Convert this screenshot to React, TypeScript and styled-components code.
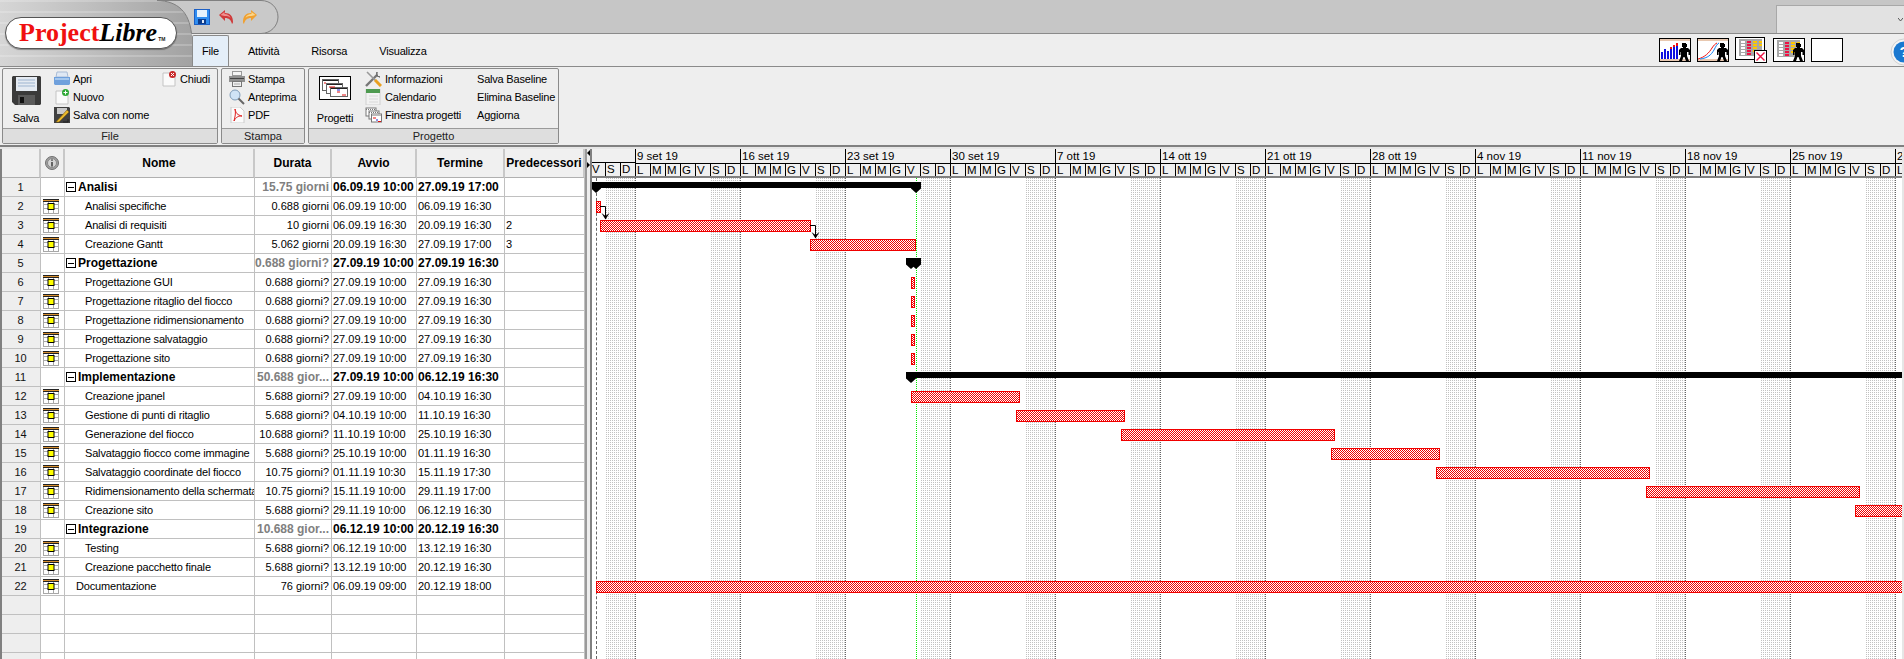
import React from 'react';
import styled, { createGlobalStyle } from 'styled-components';

const CHART_LEFT = 592;
const COLUMNS = '39px 24px 190px 77px 85px 88px 80px';

const GlobalStyle = createGlobalStyle`
    html, body {
        margin: 0;
        padding: 0;
        background: #eeeeee;
        overflow: hidden;
    }
    * {
        box-sizing: border-box;
    }
`
const Page = styled.div`
    width: 1904px;
    height: 659px;
    overflow: hidden;
    display: flex;
    flex-direction: column;
    font-family: "Liberation Sans", Arial, sans-serif;
    font-size: 11px;
    color: #000;
`

/* top bar */
const Header = styled.header`
    display: grid;
    grid-template-columns: 192px 1fr;
    height: 67px;
    border-bottom: 1px solid #8a8a8a;
`
const LogoPanel = styled.div`
    padding: 17px 0 0 5px;
    background:
        repeating-linear-gradient(180deg, rgba(255, 255, 255, 0.2) 0 2px, rgba(255, 255, 255, 0) 2px 11px),
        linear-gradient(90deg, #d6d6d6 0%, #bdbdbd 50%, #a2a2a2 100%);
`
const LogoPill = styled.div`
    width: 172px;
    height: 32px;
    background: #fff;
    border: 1px solid #555;
    border-radius: 16px;
    box-shadow: 0 1px 1px rgba(0, 0, 0, 0.35);
    display: flex;
    align-items: baseline;
    padding-left: 13px;
    font-family: "Liberation Serif", "Times New Roman", serif;
    font-size: 26px;
    font-weight: 700;
    line-height: 29px;
`
const LogoRed = styled.span`
    color: #f01010;
`
const LogoBlack = styled.span`
    color: #000;
    font-style: italic;
`
const LogoMark = styled.span`
    font-family: "Liberation Sans", sans-serif;
    font-size: 5px;
    margin-left: 1px;
    color: #222;
`
const HeaderRight = styled.div`
    display: flex;
    flex-direction: column;
    min-width: 0;
`
const TopRow = styled.div`
    height: 34px;
    display: flex;
    align-items: flex-end;
    justify-content: space-between;
    background: #c6c6c6;
    border-bottom: 1px solid #8a8a8a;
`
const QuickBar = styled.div`
    position: relative;
    width: 86px;
    height: 33px;
    display: flex;
    align-items: center;
    gap: 8px;
    padding: 0 0 0 2px;
`
const QuickCurve = styled.svg`
    position: absolute;
    left: -36px;
    top: 0;
`
const QuickIcon = styled.svg`
    position: relative;
`
const Combo = styled.div`
    width: 128px;
    height: 28px;
    background: #e2e2e2;
    border-left: 1px solid #a8a8a8;
    border-top: 1px solid #a8a8a8;
    display: flex;
    align-items: center;
    justify-content: flex-end;
    padding-right: 1px;
`
const TabBar = styled.nav`
    flex: 1;
    display: flex;
    align-items: flex-end;
    gap: 12px;
    background: #eeeeee;
    letter-spacing: -0.2px;
`
const Tab = styled.div<{ $active?: boolean }>`
    height: 31px;
    display: flex;
    align-items: center;
    padding: 0 9px;
    margin-right: ${p => (p.$active ? '-3px' : '0')};
    background: ${p => (p.$active ? '#e4eef8' : 'transparent')};
    border: 1px solid ${p => (p.$active ? '#8a8a8a' : 'transparent')};
    border-bottom: none;
    border-radius: 2px 2px 0 0;
`
const ViewTools = styled.div`
    margin-left: auto;
    align-self: stretch;
    display: flex;
    align-items: center;
    gap: 6px;
    position: relative;
    width: 245px;
`
const ViewButton = styled.svg`
    flex: none;
`
const HelpIcon = styled.svg`
    position: absolute;
    right: -14px;
    top: 4px;
`

/* ribbon */
const Ribbon = styled.section`
    height: 78px;
    display: flex;
    gap: 3px;
    padding: 1px 0 0 2px;
    background: #eeeeee;
`
const Group = styled.div<{ $width: number }>`
    width: ${p => p.$width}px;
    height: 76px;
    display: flex;
    flex-direction: column;
    border: 1px solid #8a8a8a;
    border-radius: 2px;
`
const GroupBody = styled.div`
    flex: 1;
    display: flex;
    min-height: 0;
    letter-spacing: -0.2px;
`
const GroupTitle = styled.div`
    height: 15px;
    line-height: 14px;
    text-align: center;
    background: #dedede;
    border-top: 1px solid #9a9a9a;
    color: #222;
`
const BigButton = styled.div<{ $width: number }>`
    width: ${p => p.$width}px;
    flex: none;
    display: flex;
    flex-direction: column;
    align-items: center;
    justify-content: space-between;
    padding: 7px 0 4px;
`
const ItemColumn = styled.div<{ $width?: number; $pad?: number }>`
    width: ${p => (p.$width ? `${p.$width}px` : 'auto')};
    flex: none;
    padding: 1px 0 0 ${p => p.$pad ?? 0}px;
`
const Item = styled.div`
    height: 18px;
    display: flex;
    align-items: center;
    gap: 3px;
    white-space: nowrap;
`

/* plan area */
const Workspace = styled.main`
    flex: 1;
    min-height: 0;
    display: flex;
    padding-top: 2px;
    border-top: 2px solid #808080;
    background: #e6e6e6;
`
const TablePane = styled.div`
    width: 585px;
    flex: none;
    border-left: 2px solid #808080;
    background: #fff;
    overflow: hidden;
`
const HeadRow = styled.div`
    display: grid;
    grid-template-columns: ${COLUMNS};
    height: 29px;
`
const HeadCell = styled.div`
    display: flex;
    align-items: center;
    justify-content: center;
    background: #f0f0f0;
    border-right: 2px solid #c8c8c8;
    border-bottom: 1px solid #b0b0b0;
    font-size: 12px;
    font-weight: 700;
    white-space: nowrap;
    overflow: hidden;
`
const Row = styled.div`
    display: grid;
    grid-template-columns: ${COLUMNS};
    height: 19px;
`
const Cell = styled.div<{ $bold?: boolean; $right?: boolean; $muted?: boolean }>`
    display: flex;
    align-items: center;
    justify-content: ${p => (p.$right ? 'flex-end' : 'flex-start')};
    padding: 0 2px 0 1px;
    border-right: 1px solid #c0c0c0;
    border-bottom: 1px solid #c0c0c0;
    font-size: ${p => (p.$bold ? '12px' : '11px')};
    font-weight: ${p => (p.$bold ? 700 : 400)};
    color: ${p => (p.$muted ? '#808080' : '#000')};
    white-space: nowrap;
    overflow: hidden;
`
const NumberCell = styled(Cell)`
    justify-content: center;
    background: #eeeeee;
    color: #111;
`
const IconCell = styled(Cell)`
    align-items: flex-start;
    padding: 2px 0 0 2px;
`
const NameCell = styled(Cell)<{ $indent: number }>`
    padding-left: ${p => p.$indent}px;
    letter-spacing: ${p => (p.$bold ? '0' : '-0.17px')};
`
const Collapse = styled.span`
    width: 10px;
    height: 10px;
    flex: none;
    margin-right: 2px;
    border: 1px solid #000;
    display: flex;
    align-items: center;
    justify-content: center;
    &::before {
        content: '';
        width: 6px;
        height: 1px;
        background: #000;
    }
`
const Splitter = styled.div`
    width: 7px;
    flex: none;
    position: relative;
    background: #eeeeee;
    border-left: 2px solid #9a9a9a;
    border-right: 2px solid #808080;
    &::before,
    &::after {
        content: '';
        position: absolute;
        left: 0;
        border-style: solid;
        border-width: 3px 3px 3px 0;
        border-color: transparent #000 transparent transparent;
    }
    &::before {
        top: 1px;
    }
    &::after {
        top: 13px;
        border-width: 3px 0 3px 3px;
        border-color: transparent transparent transparent #000;
    }
`

/* gantt */
const ChartPane = styled.div`
    width: 1310px;
    flex: none;
    display: flex;
    flex-direction: column;
    background: #fff;
    overflow: hidden;
`
const Timescale = styled.div`
    height: 29px;
    flex: none;
    background: #f0f0f0;
    border-bottom: 2px solid #808080;
    display: flex;
`
const ScaleWeek = styled.div<{ $width: number; $first?: boolean }>`
    width: ${p => p.$width}px;
    flex: none;
    display: flex;
    flex-direction: column;
    overflow: hidden;
    border-left: ${p => (p.$first ? 'none' : '1px solid #000')};
`
const WeekLabel = styled.div`
    height: 15px;
    line-height: 14px;
    padding-left: 1px;
    border-bottom: 1px solid #000;
    font-size: 11.5px;
    white-space: nowrap;
`
const Days = styled.div<{ $end?: boolean }>`
    display: flex;
    justify-content: ${p => (p.$end ? 'flex-end' : 'flex-start')};
    flex: 1;
`
const Day = styled.div<{ $first: boolean }>`
    width: ${p => (p.$first ? '14px' : '15px')};
    flex: none;
    padding-left: 1px;
    line-height: 13px;
    font-size: 11.5px;
    border-left: ${p => (p.$first ? 'none' : '1px solid #000')};
`
const ChartBody = styled.div`
    flex: 1;
    min-height: 0;
    position: relative;
`
const Bands = styled.div`
    position: absolute;
    inset: 0;
    display: flex;
`
const Band = styled.div<{ $width: number }>`
    width: ${p => p.$width}px;
    flex: none;
    display: flex;
    justify-content: flex-end;
    border-right: 1px dotted #666;
`
const Weekend = styled.div`
    width: 30px;
    background: conic-gradient(#c2c2c2 0 25%, #fff 0) 0 0 / 2px 2px;
`
const StartLine = styled.div`
    position: absolute;
    left: 4px;
    top: 0;
    bottom: 0;
    border-left: 1px dashed #666;
`
const StatusLine = styled.div`
    position: absolute;
    left: 324px;
    top: 0;
    bottom: 0;
    border-left: 1px dotted #00e800;
`
const GanttRow = styled.div`
    position: relative;
    height: 19px;
`
const TaskBar = styled.div`
    position: absolute;
    top: 4px;
    height: 12px;
    border: 1px solid #f00000;
    background: repeating-conic-gradient(#f00000 0 25%, #fff 0 50%) 0 0 / 2px 2px;
`
const SummaryBar = styled.div`
    position: absolute;
    top: 4px;
    height: 6px;
    background: #000;
    &::before,
    &::after {
        content: '';
        position: absolute;
        top: 0;
        width: 10px;
        height: 11px;
        background: #000;
        clip-path: polygon(0 0, 100% 0, 100% 58%, 50% 100%, 0 58%);
    }
    &::before {
        left: 0;
    }
    &::after {
        right: 0;
    }
`
const LinkArrow = styled.svg`
    position: absolute;
    top: 9px;
    z-index: 1;
`

/* small drawn icons */
const FloppyBlue = () => (
    <QuickIcon width="16" height="16" viewBox="0 0 16 16">
        <rect width="16" height="16" fill="#1c5fc4" />
        <rect x="1" y="1" width="14" height="14" fill="#2f8df0" />
        <rect x="3" y="1" width="10" height="7" fill="#e6f2fc" />
        <rect x="4" y="10" width="8" height="5" fill="#0c3c8c" />
        <rect x="8" y="11" width="2" height="3" fill="#dfeafa" />
    </QuickIcon>
);
const UndoArrow = () => (
    <QuickIcon width="16" height="16" viewBox="0 0 16 16">
        <path d="M1 6l6-5v3c5 0 8 3 8 9 0 1-1 2-1 2-1-4-3-6-7-6v3z" fill="#cf3a3a" />
        <path d="M2.5 6L6.5 3v2c3 0 5 1 6 4-2-2-3-2-6-2z" fill="#f09090" />
    </QuickIcon>
);
const RedoArrow = () => (
    <QuickIcon width="16" height="16" viewBox="0 0 16 16">
        <path d="M15 6L9 1v3C4 4 1 7 1 13c0 1 1 2 1 2 1-4 3-6 7-6v3z" fill="#f0a030" />
        <path d="M13.5 6L9.5 3v2c-3 0-5 1-6 4 2-2 3-2 6-2z" fill="#fbd68a" />
    </QuickIcon>
);
const BigFloppy = () => (
    <svg width="29" height="29" viewBox="0 0 29 29">
        <path d="M1 0h27l1 1v27l-1 1H3l-3-3V1z" fill="#3a3a3a" />
        <rect x="4" y="1" width="21" height="14" fill="#e4eaf2" />
        <path d="M6 4h17M6 7h17M6 10h17" stroke="#9db4d0" />
        <rect x="6" y="19" width="17" height="10" fill="#5a5a5a" />
        <rect x="8" y="21" width="4" height="6" fill="#111" />
    </svg>
);
const PageShape = () => <path d="M2 2h8l4 4v9H2z" fill="#fafafa" stroke="#c4c4c4" />;
const FolderIcon = () => (
    <svg width="16" height="16" viewBox="0 0 16 16">
        <path d="M3 1h10l1 5H2z" fill="#dfe8f4" stroke="#a9bcd6" />
        <path d="M0 6h16v7l-1 1H1l-1-1z" fill="#6fa0dc" />
        <path d="M1 7h14v2H1z" fill="#a6c8ee" />
    </svg>
);
const NewIcon = () => (
    <svg width="16" height="16" viewBox="0 0 16 16">
        <PageShape />
        <circle cx="11.5" cy="3.5" r="3.5" fill="#2ea836" />
        <path d="M11.5 1.5v4M9.5 3.5h4" stroke="#fff" />
    </svg>
);
const CloseFileIcon = () => (
    <svg width="16" height="16" viewBox="0 0 16 16">
        <PageShape />
        <circle cx="11.5" cy="3.5" r="3.5" fill="#c82828" />
        <path d="M10 2l3 3M13 2l-3 3" stroke="#fff" />
    </svg>
);
const SaveAsIcon = () => (
    <svg width="16" height="16" viewBox="0 0 16 16">
        <path d="M0 0h15l1 1v15H0z" fill="#404040" />
        <rect x="3" y="1" width="10" height="6" fill="#c8c8c8" />
        <path d="M2 15L13 3l2 2L5 15z" fill="#e8b82c" stroke="#7a5a10" strokeWidth="0.6" />
        <path d="M9 15h5v-3" stroke="#222" fill="none" />
    </svg>
);
const PrintIcon = () => (
    <svg width="16" height="16" viewBox="0 0 16 16">
        <rect x="3.5" y="0.5" width="9" height="4" fill="#f4f4f4" stroke="#999" />
        <rect x="0" y="5" width="16" height="6" fill="#909090" />
        <rect x="1" y="7" width="14" height="1" fill="#444" />
        <rect x="3.5" y="10.5" width="9" height="5" fill="#f0f0f0" stroke="#777" />
        <path d="M5 13h6" stroke="#aaa" />
    </svg>
);
const PreviewIcon = () => (
    <svg width="16" height="16" viewBox="0 0 16 16">
        <circle cx="6" cy="6" r="5" fill="#cfe3f6" stroke="#7f9cb8" />
        <path d="M9.5 9.5l5.5 5.5" stroke="#666" strokeWidth="2" />
    </svg>
);
const PdfIcon = () => (
    <svg width="16" height="16" viewBox="0 0 16 16">
        <path d="M2 0h9l4 4v12H2z" fill="#fbfbfb" stroke="#cccccc" />
        <path d="M6 2c1 4 2 6 7 7-4 0-6 1-8 5 1-4 2-8 1-12z" fill="none" stroke="#e02020" />
    </svg>
);
const ToolsIcon = () => (
    <svg width="17" height="16" viewBox="0 0 17 16">
        <path d="M1 15L12 4" stroke="#777" strokeWidth="2.4" />
        <path d="M12 1a3.5 3.5 0 0 0 3 5l-3-1z" fill="#777" stroke="#666" />
        <path d="M2 1l9 9" stroke="#9a9a9a" strokeWidth="1.6" />
        <path d="M10 9l6 6" stroke="#e8a020" strokeWidth="3" />
    </svg>
);
const CalendarIcon = () => (
    <svg width="17" height="16" viewBox="0 0 17 16">
        <rect x="1" y="0" width="14" height="16" fill="#f2f2f2" stroke="#d0d0d0" />
        <rect x="1" y="0" width="14" height="4" fill="#4e9a50" />
        <path d="M4 7h9M4 10h9M4 13h9" stroke="#d8d8d8" />
    </svg>
);
const MiniSheet = ({ x, y }: { x: number; y: number }) => (
    <g transform={`translate(${x} ${y})`}>
        <rect width="10" height="8" fill="#fff" stroke="#777" />
        <path d="M0 1.5h10" stroke="#777" strokeDasharray="1 1" />
    </g>
);
const WindowsIcon = () => (
    <svg width="17" height="16" viewBox="0 0 17 16">
        <MiniSheet x={1} y={1} />
        <MiniSheet x={4} y={4} />
        <MiniSheet x={6.5} y={7} />
        <path d="M8 11h3" stroke="#e01010" />
        <path d="M11 13h2" stroke="#2020d0" />
        <path d="M13 14.5h3" stroke="#e01010" />
    </svg>
);
const ProjectsIcon = () => (
    <svg width="32" height="24" viewBox="0 0 32 24">
        <rect x="0.5" y="0.5" width="31" height="23" fill="#fff" stroke="#000" />
        <g stroke="#666" fill="#fff">
            <rect x="3.5" y="3.5" width="16" height="11" />
            <rect x="7.5" y="7.5" width="16" height="10" />
            <rect x="11.5" y="11.5" width="17" height="9" />
        </g>
        <path d="M4 4.500h15M8 8.500h15M12 12.500h16" stroke="#222" />
        <path d="M5 7h2M10 11h6M18 16h3M23 19h4" stroke="#e01010" />
        <path d="M18 14h3" stroke="#2020d0" />
    </svg>
);
const TaskIcon = () => (
    <svg width="16" height="15" viewBox="0 0 16 15">
        <path d="M.5 0v15M5.5 0v15M10.5 0v15M15.5 0v15M0 5.5h16M0 9.5h16M0 14.5h16" stroke="#a8a8a8" />
        <rect width="16" height="1" fill="#222" />
        <rect y="1" width="16" height="1" fill="#d89030" />
        <rect y="2" width="16" height="1" fill="#222" />
        <rect x="5" y="4.500" width="6" height="6" fill="#ffff00" stroke="#000" />
    </svg>
);
const InfoIcon = () => (
    <svg width="14" height="14" viewBox="0 0 14 14">
        <circle cx="7" cy="7" r="6.5" fill="#a0a0a0" stroke="#707070" />
        <circle cx="7" cy="7" r="4.5" fill="#d4d4d4" stroke="#888" />
        <path d="M7 6v4.5" stroke="#333" strokeWidth="1.4" />
        <rect x="6.3" y="3.4" width="1.4" height="1.4" fill="#333" />
    </svg>
);
const Person = () => (
    <path d="M23 5h4v1h1v3h-1v1h2l2 2v5h-1.5v-3H28v4l2 5h-3l-1.5-4h-1L23 23h-3l2-5v-4h-.5v3H20v-5l2-2h2V9h-1z" fill="#000" />
);
const ViewFrame = ({ children }: { children?: React.ReactNode }) => (
    <ViewButton width="32" height="24" viewBox="0 0 32 24">
        <rect x="0.5" y="0.5" width="31" height="23" fill="#fff" stroke="#000" strokeWidth="1" />
        {children}
    </ViewButton>
);
const SheetCells = () => (
    <g>
        <rect x="4" y="2" width="23" height="17" fill="#a8a8a8" />
        <path d="M6 5h4M6 8h4M6 11h4M6 14h4M6 17h4" stroke="#fff" strokeWidth="2" />
        <path d="M12 5h4M12 8h4M12 11h4M12 14h4M12 17h4" stroke="#ee1144" strokeWidth="2" />
        <path d="M18 5h4M18 8h4M18 11h4M18 14h4M24 5h3M24 8h3" stroke="#ffc800" strokeWidth="2" />
    </g>
);
const ViewIcons = () => (
    <>
        <ViewFrame>
            <rect x="1" y="1" width="30" height="2" fill="#e8c8b0" />
            <rect x="1" y="21" width="30" height="2" fill="#e8c8b0" />
            <path d="M3 21v-7M6 21v-10M9 21v-8M12 21v-10M15 21v-12M18 21v-13" stroke="#1010e0" strokeWidth="2" />
            <path d="M12 11v-2M15 9v-2M18 8v-3" stroke="#f01010" strokeWidth="2" />
            <Person />
        </ViewFrame>
        <ViewFrame>
            <rect x="1" y="1" width="30" height="2" fill="#e8c8b0" />
            <rect x="1" y="21" width="30" height="2" fill="#e8c8b0" />
            <path d="M1 21c7-2 11-6 14-11 2-3 3-4 5-5" fill="none" stroke="#f01010" />
            <path d="M3 21c8-1 11-4 14-9 2-4 3-6 5-7" fill="none" stroke="#1080f0" />
            <Person />
        </ViewFrame>
        <ViewButton width="32" height="26" viewBox="0 0 32 26">
            <rect x="0.5" y="0.5" width="29" height="22" fill="#fff" stroke="#000" />
            <SheetCells />
            <rect x="19.5" y="13.5" width="12" height="12" fill="#fff" stroke="#000" />
            <path d="M21.5 15.5l8 8M29.5 15.5l-8 8" stroke="#ee1144" strokeWidth="1.4" />
        </ViewButton>
        <ViewFrame>
            <SheetCells />
            <Person />
        </ViewFrame>
        <ViewFrame />
        <HelpIcon width="28" height="28" viewBox="0 0 28 28">
            <circle cx="14" cy="14" r="13" fill="#f4f4f4" stroke="#d0d0d0" />
            <circle cx="14" cy="14" r="10.5" fill="#1a78d0" />
            <text x="14" y="19" textAnchor="middle" fontSize="15" fontWeight="700" fill="#fff" fontFamily="Liberation Sans">?</text>
        </HelpIcon>
    </>
);

type Task = {
    name: string;
    level: 0 | 1 | 2;
    duration: string;
    start: string;
    end: string;
    pred?: string;
    bar?: [number, number];
    summary?: [number, number];
    link?: number;
};

const tasks: Task[] = [
    { name: 'Analisi', level: 0, duration: '15.75 giorni', start: '06.09.19 10:00', end: '27.09.19 17:00', summary: [591, 921] },
    { name: 'Analisi specifiche', level: 2, duration: '0.688 giorni', start: '06.09.19 10:00', end: '06.09.19 16:30', bar: [596, 601], link: 600 },
    { name: 'Analisi di requisiti', level: 2, duration: '10 giorni', start: '06.09.19 16:30', end: '20.09.19 16:30', pred: '2', bar: [600, 811], link: 810 },
    { name: 'Creazione Gantt', level: 2, duration: '5.062 giorni', start: '20.09.19 16:30', end: '27.09.19 17:00', pred: '3', bar: [810, 916] },
    { name: 'Progettazione', level: 0, duration: '0.688 giorni?', start: '27.09.19 10:00', end: '27.09.19 16:30', summary: [906, 921] },
    { name: 'Progettazione GUI', level: 2, duration: '0.688 giorni?', start: '27.09.19 10:00', end: '27.09.19 16:30', bar: [911, 915] },
    { name: 'Progettazione ritaglio del fiocco', level: 2, duration: '0.688 giorni?', start: '27.09.19 10:00', end: '27.09.19 16:30', bar: [911, 915] },
    { name: 'Progettazione ridimensionamento', level: 2, duration: '0.688 giorni?', start: '27.09.19 10:00', end: '27.09.19 16:30', bar: [911, 915] },
    { name: 'Progettazione salvataggio', level: 2, duration: '0.688 giorni?', start: '27.09.19 10:00', end: '27.09.19 16:30', bar: [911, 915] },
    { name: 'Progettazione sito', level: 2, duration: '0.688 giorni?', start: '27.09.19 10:00', end: '27.09.19 16:30', bar: [911, 915] },
    { name: 'Implementazione', level: 0, duration: '50.688 gior...', start: '27.09.19 10:00', end: '06.12.19 16:30', summary: [906, 1920] },
    { name: 'Creazione jpanel', level: 2, duration: '5.688 giorni?', start: '27.09.19 10:00', end: '04.10.19 16:30', bar: [911, 1020] },
    { name: 'Gestione di punti di ritaglio', level: 2, duration: '5.688 giorni?', start: '04.10.19 10:00', end: '11.10.19 16:30', bar: [1016, 1125] },
    { name: 'Generazione del fiocco', level: 2, duration: '10.688 giorni?', start: '11.10.19 10:00', end: '25.10.19 16:30', bar: [1121, 1335] },
    { name: 'Salvataggio fiocco come immagine', level: 2, duration: '5.688 giorni?', start: '25.10.19 10:00', end: '01.11.19 16:30', bar: [1331, 1440] },
    { name: 'Salvataggio coordinate del fiocco', level: 2, duration: '10.75 giorni?', start: '01.11.19 10:30', end: '15.11.19 17:30', bar: [1436, 1650] },
    { name: 'Ridimensionamento della schermata', level: 2, duration: '10.75 giorni?', start: '15.11.19 10:00', end: '29.11.19 17:00', bar: [1646, 1860] },
    { name: 'Creazione sito', level: 2, duration: '5.688 giorni?', start: '29.11.19 10:00', end: '06.12.19 16:30', bar: [1855, 1920] },
    { name: 'Integrazione', level: 0, duration: '10.688 gior...', start: '06.12.19 10:00', end: '20.12.19 16:30' },
    { name: 'Testing', level: 2, duration: '5.688 giorni?', start: '06.12.19 10:00', end: '13.12.19 16:30' },
    { name: 'Creazione pacchetto finale', level: 2, duration: '5.688 giorni?', start: '13.12.19 10:00', end: '20.12.19 16:30' },
    { name: 'Documentazione', level: 1, duration: '76 giorni?', start: '06.09.19 09:00', end: '20.12.19 18:00', bar: [596, 1920] },
];

const weekNames = ['9 set 19', '16 set 19', '23 set 19', '30 set 19', '7 ott 19', '14 ott 19', '21 ott 19', '28 ott 19', '4 nov 19', '11 nov 19', '18 nov 19', '25 nov 19', '2 dic 19'];
const weekDays = ['L', 'M', 'M', 'G', 'V', 'S', 'D'];
const indents = { 0: 1, 1: 11, 2: 20 };

const pos = (from: number, to: number) => ({ left: from - CHART_LEFT, width: to - from });

export default function App() {
    return (
        <Page>
            <GlobalStyle />
            <Header>
                <LogoPanel>
                    <LogoPill>
                        <LogoRed>Project</LogoRed>
                        <LogoBlack>Libre</LogoBlack>
                        <LogoMark>TM</LogoMark>
                    </LogoPill>
                </LogoPanel>
                <HeaderRight>
                    <TopRow>
                        <QuickBar>
                            <QuickCurve width="124" height="34" viewBox="0 0 124 34">
                                <path d="M1 .5C22 1 33 12 35.5 33.5H105c10 0 17-8 17-16.5C122 8 115 .5 105 .5z" fill="#c9c9c9" stroke="#808080" />
                            </QuickCurve>
                            <FloppyBlue />
                            <UndoArrow />
                            <RedoArrow />
                        </QuickBar>
                        <Combo>
                            <svg width="5" height="4" viewBox="0 0 5 4">
                                <path d="M0 0l2.5 3L5 0" fill="none" stroke="#555" />
                            </svg>
                        </Combo>
                    </TopRow>
                    <TabBar>
                        <Tab $active>File</Tab>
                        <Tab>Attività</Tab>
                        <Tab>Risorsa</Tab>
                        <Tab>Visualizza</Tab>
                        <ViewTools>
                            <ViewIcons />
                        </ViewTools>
                    </TabBar>
                </HeaderRight>
            </Header>

            <Ribbon>
                <Group $width={216}>
                    <GroupBody>
                        <BigButton $width={46}>
                            <BigFloppy />
                            <span>Salva</span>
                        </BigButton>
                        <ItemColumn $width={112} $pad={5}>
                            <Item><FolderIcon />Apri</Item>
                            <Item><NewIcon />Nuovo</Item>
                            <Item><SaveAsIcon />Salva con nome</Item>
                        </ItemColumn>
                        <ItemColumn>
                            <Item><CloseFileIcon />Chiudi</Item>
                        </ItemColumn>
                    </GroupBody>
                    <GroupTitle>File</GroupTitle>
                </Group>
                <Group $width={84}>
                    <GroupBody>
                        <ItemColumn $pad={7}>
                            <Item><PrintIcon />Stampa</Item>
                            <Item><PreviewIcon />Anteprima</Item>
                            <Item><PdfIcon />PDF</Item>
                        </ItemColumn>
                    </GroupBody>
                    <GroupTitle>Stampa</GroupTitle>
                </Group>
                <Group $width={251}>
                    <GroupBody>
                        <BigButton $width={52}>
                            <ProjectsIcon />
                            <span>Progetti</span>
                        </BigButton>
                        <ItemColumn $width={116} $pad={4}>
                            <Item><ToolsIcon />Informazioni</Item>
                            <Item><CalendarIcon />Calendario</Item>
                            <Item><WindowsIcon />Finestra progetti</Item>
                        </ItemColumn>
                        <ItemColumn>
                            <Item>Salva Baseline</Item>
                            <Item>Elimina Baseline</Item>
                            <Item>Aggiorna</Item>
                        </ItemColumn>
                    </GroupBody>
                    <GroupTitle>Progetto</GroupTitle>
                </Group>
            </Ribbon>

            <Workspace>
                <TablePane>
                    <HeadRow>
                        <HeadCell />
                        <HeadCell><InfoIcon /></HeadCell>
                        <HeadCell>Nome</HeadCell>
                        <HeadCell>Durata</HeadCell>
                        <HeadCell>Avvio</HeadCell>
                        <HeadCell>Termine</HeadCell>
                        <HeadCell>Predecessori</HeadCell>
                    </HeadRow>
                    {tasks.map((task, i) => {
                        const parent = task.level === 0;
                        return (
                            <Row key={task.name}>
                                <NumberCell>{i + 1}</NumberCell>
                                <IconCell>{!parent && <TaskIcon />}</IconCell>
                                <NameCell $indent={indents[task.level]} $bold={parent}>
                                    {parent && <Collapse />}
                                    {task.name}
                                </NameCell>
                                <Cell $right $bold={parent} $muted={parent}>{task.duration}</Cell>
                                <Cell $bold={parent}>{task.start}</Cell>
                                <Cell $bold={parent}>{task.end}</Cell>
                                <Cell>{task.pred}</Cell>
                            </Row>
                        );
                    })}
                    {[0, 1, 2, 3].map(n => (
                        <Row key={n}>
                            <NumberCell />
                            <Cell />
                            <Cell />
                            <Cell />
                            <Cell />
                            <Cell />
                            <Cell />
                        </Row>
                    ))}
                </TablePane>
                <Splitter />
                <ChartPane>
                    <Timescale>
                        <ScaleWeek $width={43} $first>
                            <WeekLabel />
                            <Days $end>
                                {['V', 'S', 'D'].map((d, i) => <Day key={i} $first={i === 0}>{d}</Day>)}
                            </Days>
                        </ScaleWeek>
                        {weekNames.map((week, w) => (
                            <ScaleWeek key={week} $width={w === 12 ? 7 : 105}>
                                <WeekLabel>{week}</WeekLabel>
                                <Days>
                                    {weekDays.map((d, i) => <Day key={i} $first={i === 0}>{d}</Day>)}
                                </Days>
                            </ScaleWeek>
                        ))}
                    </Timescale>
                    <ChartBody>
                        <Bands>
                            <Band $width={44}><Weekend /></Band>
                            {weekNames.slice(0, 12).map(week => (
                                <Band key={week} $width={105}><Weekend /></Band>
                            ))}
                        </Bands>
                        <StartLine />
                        <StatusLine />
                        {tasks.map(task => (
                            <GanttRow key={task.name}>
                                {task.summary && <SummaryBar style={pos(task.summary[0], task.summary[1])} />}
                                {task.bar && <TaskBar style={pos(task.bar[0], task.bar[1])} />}
                                {task.link && (
                                    <LinkArrow width="12" height="24" viewBox="0 0 12 24" style={{ left: task.link - CHART_LEFT }}>
                                        <path d="M0 .5h5.5V13" fill="none" stroke="#000" />
                                        <path d="M1.500 7l4 3 4-3-4 6.500z" fill="#000" />
                                    </LinkArrow>
                                )}
                            </GanttRow>
                        ))}
                    </ChartBody>
                </ChartPane>
            </Workspace>
        </Page>
    );
}
